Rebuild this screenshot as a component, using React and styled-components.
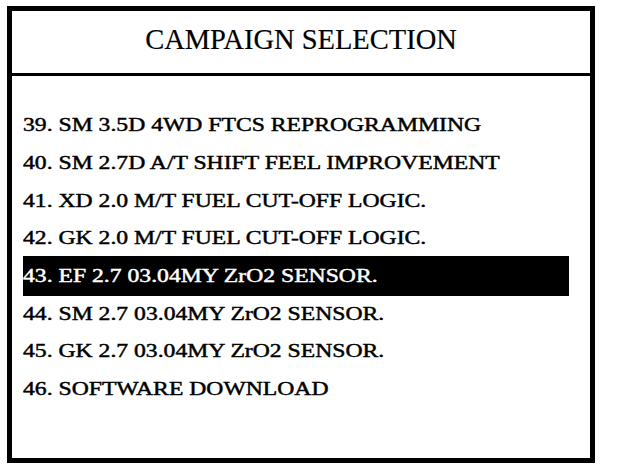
import React from "react";
import styled, { createGlobalStyle } from "styled-components";

const Global = createGlobalStyle`
  html, body { margin: 0; padding: 0; background: #fff; }
  body { width: 624px; height: 472px; overflow: hidden; }
`;

const Frame = styled.div`
  box-sizing: border-box;
  margin: 6px 0 0 7px;
  width: 588px;
  height: 457px;
  border: 5px solid #000;
  display: flex;
  flex-direction: column;
  font-family: "Liberation Serif", "Times New Roman", serif;
  color: #000;
`;

const Header = styled.div`
  box-sizing: border-box;
  height: 65px;
  border-bottom: 3px solid #000;
  display: flex;
  justify-content: center;
  padding-top: 12px;
  font-size: 28.5px;
  line-height: 33px;
  -webkit-text-stroke: 0.2px #000;
`;

const List = styled.ul`
  list-style: none;
  margin: 0;
  padding: 30px 0 0 11px;
  display: flex;
  flex-direction: column;
`;

const Row = styled.li`
  box-sizing: border-box;
  width: 546px;
  height: 37.7px;
  display: flex;
  align-items: center;
  font-size: 19px;
  line-height: 1;
  white-space: nowrap;
  color: ${(p) => (p.$selected ? "#fff" : "#000")};
  background: ${(p) => (p.$selected ? "#000" : "transparent")};
  box-shadow: ${(p) => (p.$selected ? "0 -1px 0 #000, 0 2px 0 #000" : "none")};
  -webkit-text-stroke: 0.45px ${(p) => (p.$selected ? "#fff" : "#000")};
`;

const Label = styled.span`
  display: inline-block;
  transform: scaleX(1.245);
  transform-origin: left center;
`;

const items = [
  "39. SM 3.5D 4WD FTCS REPROGRAMMING",
  "40. SM 2.7D A/T SHIFT FEEL IMPROVEMENT",
  "41. XD 2.0 M/T FUEL CUT-OFF LOGIC.",
  "42. GK 2.0 M/T FUEL CUT-OFF LOGIC.",
  "43. EF 2.7 03.04MY ZrO2 SENSOR.",
  "44. SM 2.7 03.04MY ZrO2 SENSOR.",
  "45. GK 2.7 03.04MY ZrO2 SENSOR.",
  "46. SOFTWARE DOWNLOAD",
];

export default function App() {
  return (
    <>
      <Global />
      <Frame>
        <Header>CAMPAIGN SELECTION</Header>
        <List>
          {items.map((t, i) => (
            <Row key={t} $selected={i === 4}>
              <Label>{t}</Label>
            </Row>
          ))}
        </List>
      </Frame>
    </>
  );
}
